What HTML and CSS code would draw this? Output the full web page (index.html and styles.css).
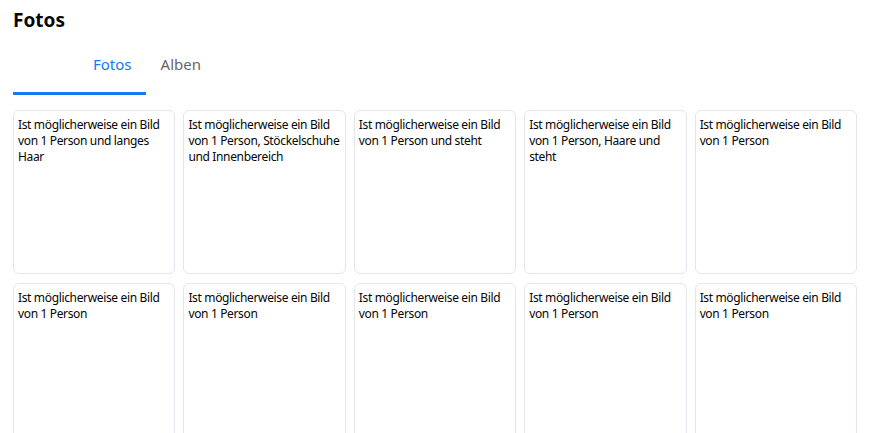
FILE: index.html
```html
<!DOCTYPE html>
<html lang="de">
<head>
    <meta charset="UTF-8">
    <meta name="viewport" content="width=device-width, initial-scale=1.0">
    <title>Fotos</title>
    <link rel="stylesheet" href="styles.css">
</head>
<body>
    <h1 class="page-title">Fotos</h1>

    <nav class="tabs">
        <a class="tab tab-active" href="#">Fotos</a>
        <a class="tab" href="#">Alben</a>
    </nav>

    <div class="photo-grid">
        <div class="photo">Ist möglicherweise ein Bild von 1 Person und langes Haar</div>
        <div class="photo">Ist möglicherweise ein Bild von 1 Person, Stöckelschuhe und Innenbereich</div>
        <div class="photo">Ist möglicherweise ein Bild von 1 Person und steht</div>
        <div class="photo">Ist möglicherweise ein Bild von 1 Person, Haare und steht</div>
        <div class="photo">Ist möglicherweise ein Bild von 1 Person</div>
        <div class="photo">Ist möglicherweise ein Bild von 1 Person</div>
        <div class="photo">Ist möglicherweise ein Bild von 1 Person</div>
        <div class="photo">Ist möglicherweise ein Bild von 1 Person</div>
        <div class="photo">Ist möglicherweise ein Bild von 1 Person</div>
        <div class="photo">Ist möglicherweise ein Bild von 1 Person</div>
    </div>
</body>
</html>
```

FILE: styles.css
```css
body {
    font-family: "Noto Sans", "Open Sans", sans-serif;
    color: #050505;
    background-color: #ffffff;
    margin: 0;
    padding: 0 12px 0 13px;
}
.page-title {
    font-size: 19px;
    font-weight: bold;
    line-height: 24px;
    margin: 0;
    padding-top: 8px;
}
.tabs {
    display: flex;
    margin-top: 13px;
}
.tab {
    font-size: 15px;
    line-height: 20px;
    color: #65676b;
    text-decoration: none;
    padding: 9px 15px 18px;
}
.tab-active {
    color: #1877f2;
    padding-left: 80px;
    padding-right: 14px;
    border-bottom: 3px solid #1877f2;
}
.photo-grid {
    display: grid;
    grid-template-columns: repeat(5, 1fr);
    gap: 9px 8px;
    margin-top: 15px;
}
.photo {
    aspect-ratio: 1;
    border: 1px solid #e4e6eb;
    border-radius: 6px;
    padding: 6px 4px 4px;
    font-size: 12px;
    letter-spacing: -0.35px;
    line-height: 16px;
}
```
